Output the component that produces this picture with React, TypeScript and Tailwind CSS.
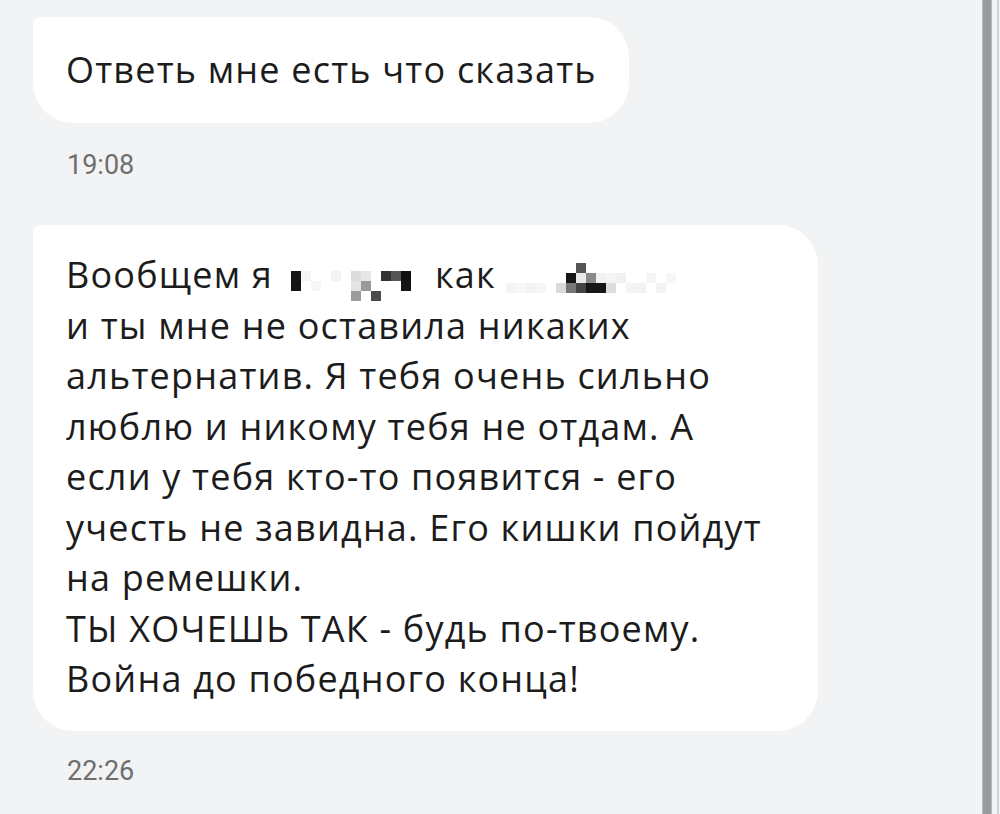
type Cell = [number, number, string];

// pixelated (censored) words: [col, row, colour] on a 10px grid
const censorA: Cell[] = [
  [0, 0, '#151515'], [0, 1, '#151515'],
  [1, 0, '#f4f4f4'], [2, 1, '#f6f6f6'], [4, 0, '#f3f3f3'],
  [6, 0, '#dcdcdc'], [7, 0, '#e6e6e6'], [6, 1, '#e4e4e4'], [7, 1, '#9a9a9a'],
  [9, 0, '#333333'], [10, 0, '#555555'], [11, 0, '#111111'], [11, 1, '#151515'],
  [6, 2, '#9c9c9c'], [8, 2, '#4a4a4a'],
];

const censorB: Cell[] = [
  [7, 0, '#555555'],
  [0, 2, '#f4f4f4'], [1, 2, '#f7f7f7'], [2, 2, '#f3f3f3'], [3, 2, '#f6f6f6'],
  [6, 1, '#151515'], [7, 1, '#e8e8e8'], [8, 1, '#8a8a8a'],
  [5, 2, '#dadada'], [6, 2, '#777777'], [7, 2, '#444444'], [8, 2, '#161616'], [9, 2, '#161616'], [10, 2, '#dddddd'],
  [9, 1, '#f2f2f2'], [10, 1, '#f5f5f5'], [11, 1, '#f1f1f1'], [12, 2, '#f4f4f4'], [13, 2, '#f2f2f2'],
  [14, 1, '#f5f5f5'], [15, 2, '#f3f3f3'], [16, 1, '#f6f6f6'],
];

// zero-height inline box on the baseline; the pixel grid hangs over it
const Censor = ({ cells, cols, className, top }: { cells: Cell[]; cols: number; className: string; top: string }) => (
  <span className={`relative inline-block h-0 align-baseline ${className}`} style={{ width: cols * 10 }}>
    <span
      className={`absolute left-0 grid grid-rows-[repeat(3,10px)] ${top}`}
      style={{ gridTemplateColumns: `repeat(${cols}, 10px)` }}
    >
      {cells.map(([c, r, bg], i) => (
        <span key={i} style={{ gridColumn: c + 1, gridRow: r + 1, background: bg }} />
      ))}
    </span>
  </span>
);

const Time = ({ children, className }: { children: string; className: string }) => (
  <div className={`pl-[34px] text-[27px] leading-[32px] text-[#6e6e6e] font-['Roboto',sans-serif] ${className}`}>
    {children}
  </div>
);

export default function App() {
  return (
    <div className="h-[814px] w-[1000px] overflow-hidden bg-[#f2f3f5] flex font-['Open_Sans','Noto_Sans',sans-serif] text-[#1c1c1c]">
      <div className="flex-1 pl-[33px] pt-[17px]">
        <div className="w-fit bg-white rounded-[40px] rounded-tl-[6px] pl-[33px] pr-[32px] py-[28px] text-[36px] leading-[50px] tracking-[1.2px]">
          Ответь мне есть что сказать
        </div>
        <Time className="mt-[26px]">19:08</Time>

        <div className="mt-[44px] w-[785px] bg-white rounded-[40px] rounded-tl-[6px] pl-[33px] pr-[20px] pt-[25px] pb-[26px] text-[36px] leading-[50.5px] tracking-[1.2px]">
          Вообщем я
          <Censor cells={censorA} cols={12} className="ml-[18px] mr-[24px]" top="top-[-17px]" />
          как
          <Censor cells={censorB} cols={18} className="ml-[10px]" top="top-[-25px]" />
          <br />
          и ты мне не оставила никаких
          <br />
          альтернатив. Я тебя очень сильно
          <br />
          люблю и никому тебя не отдам. А
          <br />
          если у тебя кто-то появится - его
          <br />
          учесть не завидна. Его кишки пойдут
          <br />
          на ремешки.
          <br />
          ТЫ ХОЧЕШЬ ТАК - будь по-твоему.
          <br />
          Война до победного конца!
        </div>
        <Time className="mt-[24px]">22:26</Time>
      </div>

      <div className="w-[10px] bg-[#999a9c] border-x border-[#b8b9bb]" />
      <div className="w-[8px] flex justify-end">
        <div className="w-[2px] mr-[1px] bg-[#d2d3d5]" />
      </div>
    </div>
  );
}
